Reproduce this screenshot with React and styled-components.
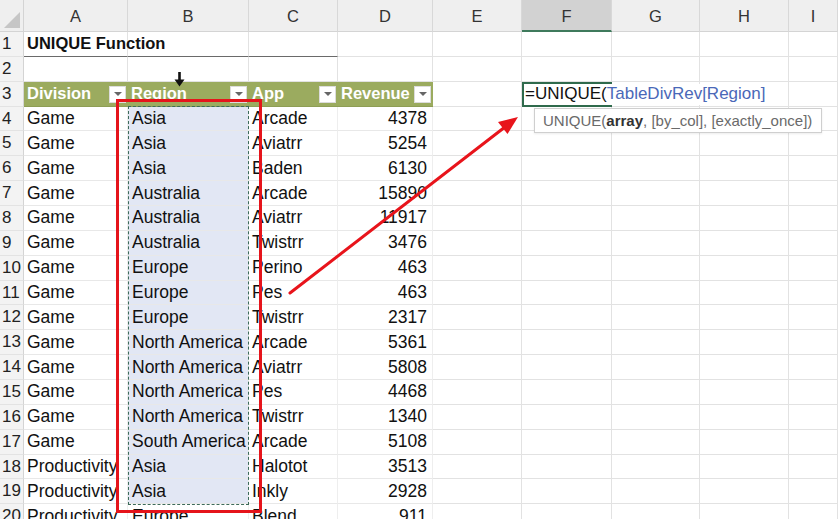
import * as React from 'react'
import styled, {createGlobalStyle} from 'styled-components'

const GlobalStyle = createGlobalStyle`
  html, body {
    margin: 0;
    padding: 0;
    background: #fff;
    overflow: hidden;
  }
  body {
    font-family: "Liberation Sans", Arial, sans-serif;
  }
`

const COLS = ['A', 'B', 'C', 'D', 'E', 'F', 'G', 'H', 'I']

const rows = [
  ['Game', 'Asia', 'Arcade', 4378],
  ['Game', 'Asia', 'Aviatrr', 5254],
  ['Game', 'Asia', 'Baden', 6130],
  ['Game', 'Australia', 'Arcade', 15890],
  ['Game', 'Australia', 'Aviatrr', 11917],
  ['Game', 'Australia', 'Twistrr', 3476],
  ['Game', 'Europe', 'Perino', 463],
  ['Game', 'Europe', 'Pes', 463],
  ['Game', 'Europe', 'Twistrr', 2317],
  ['Game', 'North America', 'Arcade', 5361],
  ['Game', 'North America', 'Aviatrr', 5808],
  ['Game', 'North America', 'Pes', 4468],
  ['Game', 'North America', 'Twistrr', 1340],
  ['Game', 'South America', 'Arcade', 5108],
  ['Productivity', 'Asia', 'Halotot', 3513],
  ['Productivity', 'Asia', 'Inkly', 2928],
  ['Productivity', 'Europe', 'Blend', 911]
]

const headers = ['Division', 'Region', 'App', 'Revenue']

export default function App(){
  return (
    <Page>
      <GlobalStyle/>
      <Grid>
        <Corner><span/></Corner>
        {COLS.map(c => (
          <ColHead key={c} $active={c === 'F'}>{c}</ColHead>
        ))}

        {/* row 1 */}
        <RowHead>1</RowHead>
        <Cell $bold $underline>UNIQUE Function</Cell>
        <Cell $underline/>
        <Cell $underline/>
        {Array.from({length: 6}).map((_, i) => <Cell key={i}/>)}

        {/* row 2 */}
        <RowHead>2</RowHead>
        {Array.from({length: 9}).map((_, i) => <Cell key={i}/>)}

        {/* row 3 */}
        <RowHead>3</RowHead>
        {headers.map(h => (
          <TableHead key={h}>
            {h}
            <Filter><span/></Filter>
          </TableHead>
        ))}
        <Cell/>
        <ActiveCell>
          <Formula>
            =UNIQUE(<Ref>TableDivRev[Region]</Ref>
          </Formula>
          <Tip>
            UNIQUE(<b>array</b>, [by_col], [exactly_once])
          </Tip>
        </ActiveCell>
        <Cell/>
        <Cell/>
        <Cell/>

        {rows.map((r, i) => (
          <React.Fragment key={i}>
            <RowHead>{i + 4}</RowHead>
            <Cell $table>{r[0]}</Cell>
            <Cell $table $selected={i < 16} $pad={4}>{r[1]}</Cell>
            <Cell $table>{r[2]}</Cell>
            <Cell $table $right>{r[3]}</Cell>
            {Array.from({length: 5}).map((_, k) => <Cell key={k}/>)}
          </React.Fragment>
        ))}
      </Grid>

      <Marquee/>
      <RedBox/>
      <ColCursor width="11" height="15" viewBox="0 0 11 15">
        <rect x="4.2" y="0" width="2.6" height="8" fill="#111"/>
        <polygon points="0.5,7.5 10.5,7.5 5.5,14.5" fill="#111"/>
      </ColCursor>
      <Arrow width="838" height="519" viewBox="0 0 838 519">
        <line x1="290" y1="293" x2="505" y2="127" stroke="#e8141b" strokeWidth="3" strokeLinecap="round"/>
        <polygon points="518,117 507.5,134 498,122" fill="#e8141b"/>
      </Arrow>
    </Page>
  )
}

const Page = styled.div`
  position: relative;
  width: 838px;
  height: 519px;
  overflow: hidden;
`

const Grid = styled.div`
  display: grid;
  grid-template-columns: 24px 104px 121px 89px 95px 89px 90px 88px 89px 1fr;
  grid-template-rows: 32px repeat(20, 24.87px);
  font-size: 17.5px;
  color: #111;
`

const Corner = styled.div`
  position: relative;
  background: #efefef;
  border-right: 1px solid #d4d4d4;
  border-bottom: 1px solid #d4d4d4;

  span{
    position: absolute;
    right: 3px;
    bottom: 3px;
    width: 0;
    height: 0;
    border-left: 16px solid transparent;
    border-bottom: 16px solid #c6c6c6;
  }
`

const ColHead = styled.div`
  display: flex;
  align-items: center;
  justify-content: center;
  background: ${p => p.$active ? '#d2d2d2' : '#efefef'};
  border-right: 1px solid #d8d8d8;
  border-bottom: ${p => p.$active ? '2px solid #3f7a5c' : '1px solid #d4d4d4'};
  color: #333;
  font-size: 16.5px;
  padding-top: 2px;
  box-sizing: border-box;
`

const RowHead = styled.div`
  display: flex;
  align-items: center;
  padding-left: 2px;
  background: #f3f3f3;
  border-right: 1px solid #d4d4d4;
  border-bottom: 1px solid #e3e3e3;
  font-size: 17px;
  color: #222;
  box-sizing: border-box;
`

const Cell = styled.div`
  display: flex;
  align-items: center;
  justify-content: ${p => p.$right ? 'flex-end' : 'flex-start'};
  padding: 0 ${p => p.$right ? 5 : 0}px 0 ${p => p.$pad || 3}px;
  box-sizing: border-box;
  white-space: nowrap;
  overflow: ${p => p.$bold ? 'visible' : 'hidden'};
  position: relative;
  z-index: ${p => p.$bold ? 1 : 0};
  font-weight: ${p => p.$bold ? 700 : 400};
  font-size: ${p => p.$bold ? '16.5px' : '17.5px'};
  background: ${p => p.$selected ? '#e2e7f4' : '#fff'};
  border-right: 1px solid ${p => p.$table ? '#eeeeee' : '#e2e2e2'};
  border-bottom: ${p => p.$underline ? '1.5px solid #6a6a6a' : `1px solid ${p.$table ? '#e8e8e8' : '#e2e2e2'}`};
`

const TableHead = styled.div`
  position: relative;
  display: flex;
  align-items: center;
  padding-left: 3px;
  background: #9bab5f;
  color: #fff;
  font-weight: 700;
  font-size: 16.5px;
  white-space: nowrap;
  overflow: hidden;
  border-bottom: 1px solid #8e9e55;
`

const Filter = styled.div`
  position: absolute;
  right: 2px;
  top: 4px;
  width: 17px;
  height: 17px;
  background: #fff;
  border: 1px solid #dcdcdc;
  box-sizing: border-box;
  display: flex;
  align-items: center;
  justify-content: center;

  span{
    width: 0;
    height: 0;
    border-left: 4px solid transparent;
    border-right: 4px solid transparent;
    border-top: 4px solid #666;
  }
`

const ActiveCell = styled.div`
  position: relative;
  z-index: 2;
  border: 2px solid #2f6a4c;
  box-sizing: border-box;
  background: #fff;
`

const Formula = styled.div`
  position: absolute;
  left: 1px;
  top: 0;
  bottom: 0;
  display: flex;
  align-items: center;
  white-space: nowrap;
  font-size: 17px;
  color: #111;
  background: #fff;
  padding-right: 4px;
`

const Ref = styled.span`
  color: #4a68b8;
`

const Tip = styled.div`
  position: absolute;
  left: 10px;
  top: 24px;
  width: 288px;
  height: 25px;
  box-sizing: border-box;
  padding-left: 8px;
  display: flex;
  align-items: center;
  white-space: nowrap;
  background: #fff;
  border: 1px solid #cfcfcf;
  box-shadow: 0 1px 2px rgba(0, 0, 0, .08);
  font-size: 15px;
  color: #6a6a6a;

  b{
    color: #333;
  }
`

const Marquee = styled.div`
  position: absolute;
  left: 128px;
  top: 106px;
  width: 121px;
  height: 399px;
  box-sizing: border-box;
  border: 1.5px dashed #3d6b5a;
  pointer-events: none;
`

const RedBox = styled.div`
  position: absolute;
  left: 116px;
  top: 99px;
  width: 146px;
  height: 414px;
  box-sizing: border-box;
  border: 3px solid #e5141b;
  pointer-events: none;
`

const ColCursor = styled.svg`
  position: absolute;
  left: 174px;
  top: 72px;
`

const Arrow = styled.svg`
  position: absolute;
  left: 0;
  top: 0;
  pointer-events: none;
`
